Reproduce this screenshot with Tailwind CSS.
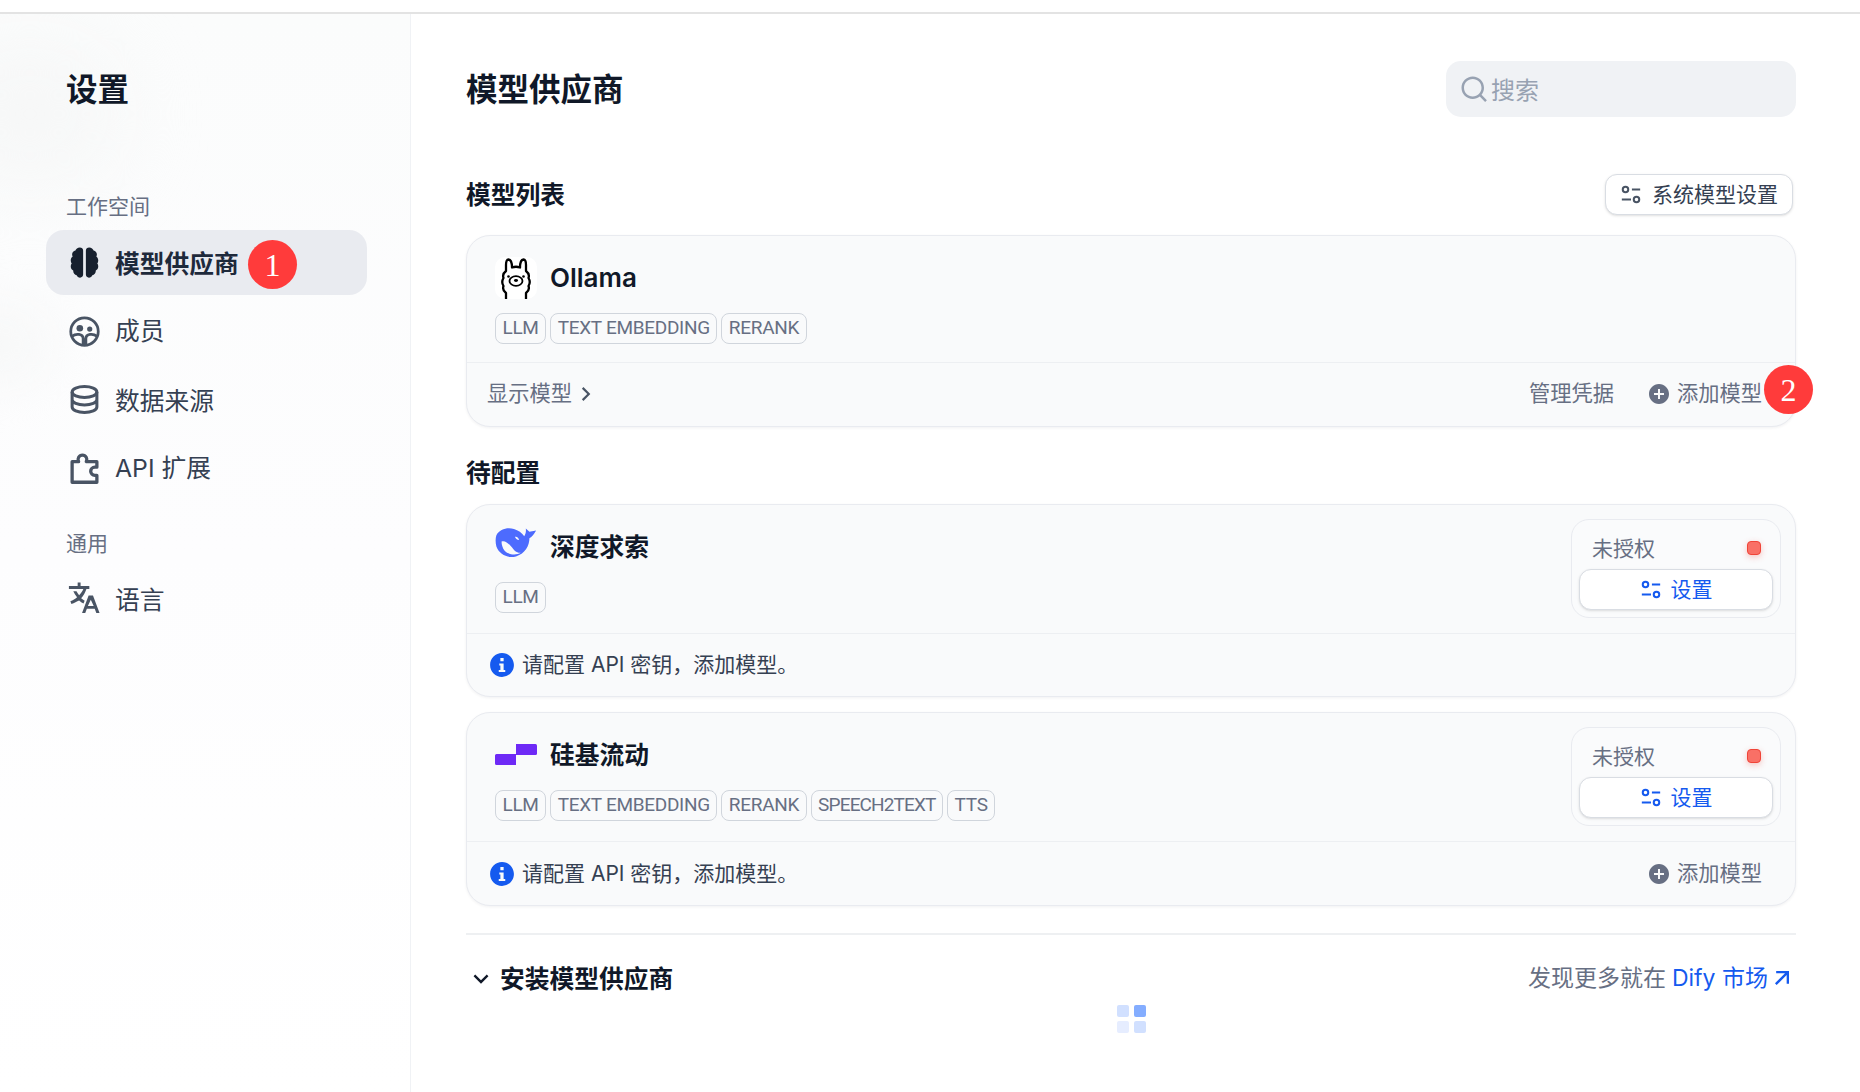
<!DOCTYPE html>
<html lang="zh">
<head>
<meta charset="utf-8">
<title>设置</title>
<script src="https://cdn.jsdelivr.net/npm/@tailwindcss/browser@4"></script>
</head>
<body class="bg-white [font-family:Inter,'Noto_Sans_CJK_SC',sans-serif] text-[#354052] overflow-hidden">
<div class="w-[1860px] h-[1092px] flex flex-col overflow-hidden">
  <div class="h-[14px] shrink-0 border-b-2 border-[#e3e3e3] bg-white"></div>
  <div class="flex flex-1 min-h-0">
    <!-- Sidebar -->
    <aside class="relative w-[411px] shrink-0 border-r border-[#f0f2f5] bg-linear-to-b from-[#fbfcfc] via-[#fdfdfe] to-white pl-[46px] pr-[43px] pt-[53px] overflow-hidden">
      <div class="absolute -left-[60px] top-[30px] w-[180px] h-[140px] rounded-full bg-[#f6f7f7] blur-2xl"></div>
      <div class="absolute -left-[60px] top-[290px] w-[110px] h-[80px] rounded-full bg-[#f7f8f8] blur-xl"></div>
      <div class="relative">
        <h1 class="h-[44px] pl-[20px] pt-[1px] text-[31.500px] leading-[44px] font-bold text-[#101828] mb-[80px]">设置</h1>
        <div class="h-[30px] pl-[20px] pt-[1px] text-[21px] leading-[30px] text-[#676f83] mb-[9px]">工作空间</div>
        <nav class="flex flex-col gap-[3.500px]">
          <a class="relative h-[65px] rounded-[18px] bg-[#e9ebf0] flex items-center pl-[22px] gap-[14px] text-[24.750px] font-semibold text-[#1e293b]">
            <svg class="w-[33px] h-[33px] text-[#17202e]" viewBox="0 0 24 24" fill="currentColor"><path d="M11 3.200C11 1.900 10 1 8.600 1 7 1 5.700 2 5.400 3.300 3.900 3.600 3 4.800 3 6.200c0 .6.1 1 .4 1.500C2.400 8.400 2 9.400 2 10.600c0 .9.300 1.600.7 2.200-.5.6-.7 1.300-.7 2.100 0 1.300.7 2.400 1.800 2.900v.3c0 1.600 1.100 2.900 2.500 3.200.4 1 1.400 1.700 2.500 1.700 1.200 0 2.200-.9 2.200-2.200zM13 3.200C13 1.900 14 1 15.400 1c1.600 0 2.900 1 3.200 2.300C20.100 3.600 21 4.800 21 6.200c0 .6-.1 1-.4 1.500.9.7 1.400 1.700 1.400 2.900 0 .9-.3 1.600-.7 2.200.5.6.7 1.300.7 2.100 0 1.300-.7 2.400-1.800 2.900v.3c0 1.600-1.100 2.900-2.500 3.200-.4 1-1.400 1.700-2.500 1.700-1.200 0-2.200-.9-2.200-2.200z"/></svg>
            <span class="pt-[4px]">模型供应商</span>
            <span class="absolute left-[202px] top-[10px] w-[49px] h-[49px] rounded-full bg-[#ff3b3b] text-white flex items-center justify-center [font-family:'Liberation_Serif',serif] text-[32px] font-normal">1</span>
          </a>
          <a class="h-[65px] rounded-[18px] flex items-center pl-[22px] gap-[14px] text-[24.750px] text-[#354052]">
            <svg class="w-[33px] h-[33px] text-[#495464]" viewBox="0 0 24 24" fill="none" stroke="currentColor" stroke-width="2"><circle cx="12" cy="12" r="10"/><circle cx="8.600" cy="9.600" r="2.400" fill="currentColor" stroke="none"/><circle cx="15.800" cy="10.200" r="1.900" fill="currentColor" stroke="none"/><path d="M2.800 15.500c1.600-1.200 3.400-1.700 5.200-1.400 1.800.3 3 1.200 3 3v4.400M21.200 15.500c-1.600-1.200-3.400-1.700-5.200-1.400-1.800.3-3 1.200-3 3v4.400"/></svg>
            <span class="pt-[2px]">成员</span>
          </a>
          <a class="h-[65px] rounded-[18px] flex items-center pl-[22px] gap-[14px] text-[24.750px] text-[#354052]">
            <svg class="w-[33px] h-[33px] text-[#495464]" viewBox="0 0 24 24" fill="none" stroke="currentColor" stroke-width="2.200"><ellipse cx="12" cy="6.500" rx="9" ry="4"/><path d="M3 6.500v11c0 2.200 4 4 9 4s9-1.800 9-4v-11M3 12c0 2.200 4 4 9 4s9-1.800 9-4"/></svg>
            <span class="pt-[5px]">数据来源</span>
          </a>
          <a class="h-[65px] rounded-[18px] flex items-center pl-[22px] gap-[14px] text-[24.750px] text-[#354052]">
            <svg class="w-[33px] h-[33px] text-[#495464]" viewBox="0 0 24 24" fill="none" stroke="currentColor" stroke-width="2.400" stroke-linejoin="round"><path d="M3 22V7h4.700a3.200 3.200 0 1 1 5.600 0H21v4h-1.500a3 3 0 1 0 0 6H21v5z"/></svg>
            <span class="pt-[1px]">API 扩展</span>
          </a>
        </nav>
        <div class="mt-[27.500px] h-[30px] pl-[20px] pt-[1px] text-[21px] leading-[30px] text-[#676f83] mb-[8px]">通用</div>
        <a class="h-[65px] rounded-[18px] flex items-center pl-[20px] gap-[14px] text-[24.750px] text-[#354052]">
          <svg class="w-[35px] h-[35px] text-[#495464]" viewBox="0 0 24 24" fill="currentColor"><path fill-rule="evenodd" d="M18.500 10 23 22h-2.200l-1.100-3h-5.400l-1.100 3H11l4.500-12zM17 12.800 15 17.200h4zM10 1v2.500h6v2h-2c-.8 2.400-2 4.500-3.600 6.300.7.600 1.500 1.200 2.400 1.700l-.8 1.900c-1.100-.6-2.100-1.300-3-2.100C7.500 13.800 5.700 15 3.700 15.800L3 13.900c1.700-.7 3.300-1.600 4.600-2.800C6.500 9.800 5.600 8.500 5 7h2.200c.5 1 1.100 1.900 1.800 2.700 1.300-1.300 2.200-2.600 2.900-4.200H2v-2h6V1z"/></svg>
          <span class="pt-[4px]">语言</span>
        </a>
      </div>
    </aside>

    <!-- Main -->
    <main class="flex-1 min-w-0 pl-[55px] pr-[64px] pt-[47px]">
      <header class="flex items-center justify-between h-[56px]">
        <h2 class="pt-[2px] text-[31.500px] font-bold text-[#101828]">模型供应商</h2>
        <div class="w-[350px] h-[56px] rounded-[15px] bg-[#f0f2f5] flex items-center pl-[13px] gap-[2px] text-[24px] text-[#98a2b2]">
          <svg class="w-[30px] h-[30px]" viewBox="0 0 24 24" fill="currentColor"><path fill-rule="evenodd" d="M18.031 16.617 22.314 20.900 20.900 22.314 16.617 18.031C15.077 19.263 13.124 20 11 20 6.032 20 2 15.968 2 11S6.032 2 11 2s9 4.032 9 9c0 2.124-.737 4.077-1.969 5.617zM16.025 15.875C17.248 14.615 18 12.896 18 11c0-3.868-3.133-7-7-7s-7 3.132-7 7 3.133 7 7 7c1.896 0 3.615-.752 4.875-1.975z"/></svg>
          <span class="pt-[4px]">搜索</span>
        </div>
      </header>

      <div class="mt-[57px] h-[41px] flex items-center justify-between mb-[20px]">
        <h3 class="pt-[2px] text-[24.750px] font-bold text-[#101828]">模型列表</h3>
        <button class="mr-[3px] w-[188px] h-[41px] rounded-[12px] border border-[#d9dde3] bg-white shadow-sm flex items-center justify-center gap-[10px] text-[21px] text-[#354052]">
          <svg class="w-[22px] h-[22px] text-[#495464]" viewBox="0 0 24 24" fill="none" stroke="currentColor" stroke-width="2.200"><circle cx="6" cy="6" r="3"/><path d="M13 6h9M2 17h10"/><circle cx="18" cy="17" r="3"/></svg>
          <span>系统模型设置</span>
        </button>
      </div>

      <!-- Ollama card -->
      <section class="relative h-[192px] rounded-[24px] border border-[#e9ebf0] bg-[#f9fafb] shadow-[0_1px_3px_rgba(16,24,40,0.06)] flex flex-col">
        <div class="h-[126px] pl-[28px] pt-[21px]">
          <div class="flex items-center gap-[14px] h-[42px]">
            <div class="w-[42px] h-[42px] rounded-[10px] bg-white overflow-hidden">
              <svg viewBox="0 0 42 42" class="w-[42px] h-[42px]" fill="none" stroke="#000" stroke-width="2.300" stroke-linejoin="round" stroke-linecap="round"><path d="M11 42V36Q7 33 8.500 29Q6 25 8.500 21Q7 17 11 14V8Q11 2.500 13.500 2.500Q17 3 17 10.500Q21 9 25 10.500Q25 3 28.500 2.500Q31 2.500 31 8V14Q35 17 33.500 21Q36 25 33.500 29Q35 33 31 36V42"/><ellipse cx="21" cy="24" rx="6.500" ry="4.800" stroke-width="1.800"/><ellipse cx="21" cy="23.500" rx="2" ry="1.400" fill="#000" stroke="none"/><circle cx="13.500" cy="19.500" r="1.300" fill="#000" stroke="none"/><circle cx="28.500" cy="19.500" r="1.300" fill="#000" stroke="none"/></svg>
            </div>
            <span class="-mt-[2px] text-[26px] font-semibold text-[#101828] -ml-[1px]">Ollama</span>
          </div>
          <div class="mt-[14px] flex gap-[4px]">
            <span class="h-[31px] px-[6.500px] rounded-[8px] border border-[#d0d5dc] flex items-center [font-family:Roboto,sans-serif] text-[19px] tracking-[-0.3px] text-[#676f83] uppercase">LLM</span>
            <span class="h-[31px] px-[6.500px] rounded-[8px] border border-[#d0d5dc] flex items-center [font-family:Roboto,sans-serif] text-[19px] tracking-[-0.3px] text-[#676f83] uppercase">TEXT EMBEDDING</span>
            <span class="h-[31px] px-[6.500px] rounded-[8px] border border-[#d0d5dc] flex items-center [font-family:Roboto,sans-serif] text-[19px] tracking-[-0.3px] text-[#676f83] uppercase">RERANK</span>
          </div>
        </div>
        <div class="flex-1 border-t border-[#edeff2] pl-[20px] pr-[33px] pb-[2px] flex items-center justify-between text-[21.250px] text-[#676f83]">
          <div class="flex items-center gap-[1px]">
            <span>显示模型</span>
            <svg class="w-[26px] h-[26px] text-[#495464]" viewBox="0 0 24 24" fill="currentColor"><path d="M13.172 12 8.222 7.050 9.636 5.636 16 12 9.636 18.364 8.222 16.950z"/></svg>
          </div>
          <div class="flex items-center">
            <span class="mr-[33px]">管理凭据</span>
            <svg class="w-[24px] h-[24px] mr-[6px]" viewBox="0 0 24 24" fill="currentColor"><path fill-rule="evenodd" d="M12 22C6.477 22 2 17.523 2 12S6.477 2 12 2s10 4.477 10 10-4.477 10-10 10zM11 11H7v2h4v4h2v-4h4v-2h-4V7h-2z"/></svg>
            <span>添加模型</span>
          </div>
        </div>
        <span class="absolute left-[1297px] top-[129px] w-[49px] h-[49px] rounded-full bg-[#ff3b3b] text-white flex items-center justify-center [font-family:'Liberation_Serif',serif] text-[32px]">2</span>
      </section>

      <h3 class="mt-[30px] h-[32px] leading-[32px] text-[24.750px] font-bold text-[#101828] mb-[15px]">待配置</h3>

      <!-- DeepSeek card -->
      <section class="h-[193px] rounded-[24px] border border-[#e9ebf0] bg-[#f9fafb] shadow-[0_1px_3px_rgba(16,24,40,0.06)] flex flex-col">
        <div class="h-[128px] pl-[28px] pr-[14px] pt-[14px] flex justify-between">
          <div class="pt-[7px]">
            <div class="flex items-center gap-[14px] h-[42px]">
              <svg viewBox="0 0 40 31" class="w-[42px] h-[32px] -mt-[8px]"><path fill="#4d6bfe" d="M1 8C4 2 12 0 18 2 22 3 26 6 28 9 29 7 30 5 29.500 1.500L33 4.500 39.500 3.500C37.500 7 35.500 9.500 33 11 33 18 29 26 20 28.500 12 30.500 4 27 1 19 0 15 0 11 1 8Z"/><path fill="#f9fafb" d="M6 14C10 12.500 14 17 17.500 21.500 19.500 24 21.500 25 24.500 25 20.500 27.500 12.500 27 9 23 7 20.500 6 17 6 14Z"/><path fill="#f9fafb" d="M19 9.500C21 9 22.500 10.500 23 12.500 21 12.500 19.500 11.500 19 9.500Z"/></svg>
              <span class="text-[24.750px] font-bold text-[#101828] pt-[1px] -ml-[1px]">深度求索</span>
            </div>
            <div class="mt-[14px] flex gap-[4px]">
              <span class="h-[31px] px-[6.500px] rounded-[8px] border border-[#d0d5dc] flex items-center [font-family:Roboto,sans-serif] text-[19px] tracking-[-0.3px] text-[#676f83] uppercase">LLM</span>
            </div>
          </div>
          <div class="w-[210px] h-[99px] rounded-[18px] border border-[#e9ebf0] bg-[#fafbfc] px-[7px]">
            <div class="h-[49px] pt-[6px] pl-[13px] pr-[12px] flex items-center justify-between text-[21px] text-[#676f83]">
              <span class="pt-[2px]">未授权</span>
              <span class="w-[14px] h-[14px] rounded-[4px] bg-[#f97066] border border-[#f04438] shadow-[0_2px_6px_rgba(240,68,56,0.3)]"></span>
            </div>
            <button class="w-full h-[41px] rounded-[12px] border border-[#d9dde3] bg-white shadow-sm flex items-center justify-center gap-[9px] text-[21px] text-[#155aef]">
              <svg class="w-[22px] h-[22px]" viewBox="0 0 24 24" fill="none" stroke="currentColor" stroke-width="2.200"><circle cx="6" cy="6" r="3"/><path d="M13 6h9M2 17h10"/><circle cx="18" cy="17" r="3"/></svg>
              <span>设置</span>
            </button>
          </div>
        </div>
        <div class="flex-1 border-t border-[#edeff2] pl-[22px] flex items-center gap-[7px] text-[21px] text-[#354052]">
          <svg class="w-[26px] h-[26px] text-[#155aef]" viewBox="0 0 24 24" fill="currentColor"><path fill-rule="evenodd" d="M12 23C5.925 23 1 18.075 1 12S5.925 1 12 1s11 4.925 11 11-4.925 11-11 11zM10.500 5.500h3v3h-3zM9.500 10.500h4v6h1.500v2h-6v-2h1.500v-4h-1z"/></svg>
          <span>请配置 API 密钥，添加模型。</span>
        </div>
      </section>

      <!-- SiliconFlow card -->
      <section class="mt-[15px] h-[194px] rounded-[24px] border border-[#e9ebf0] bg-[#f9fafb] shadow-[0_1px_3px_rgba(16,24,40,0.06)] flex flex-col">
        <div class="h-[128px] pl-[28px] pr-[14px] pt-[14px] flex justify-between">
          <div class="pt-[7px]">
            <div class="flex items-center gap-[14px] h-[42px]">
              <svg viewBox="0 0 42 21" class="w-[42px] h-[21px] -mt-[2px]" fill="#6e29f6"><path d="M1.500 10H21V21H1.500A1.500 1.500 0 0 1 0 19.500V11.500A1.500 1.500 0 0 1 1.500 10z"/><path d="M21 0h19.500A1.500 1.500 0 0 1 42 1.500V9.500A1.500 1.500 0 0 1 40.500 11H21z"/></svg>
              <span class="text-[24.750px] font-bold text-[#101828] pt-[2px] -ml-[1px]">硅基流动</span>
            </div>
            <div class="mt-[14px] flex gap-[4px]">
              <span class="h-[31px] px-[6.500px] rounded-[8px] border border-[#d0d5dc] flex items-center [font-family:Roboto,sans-serif] text-[19px] tracking-[-0.3px] text-[#676f83] uppercase">LLM</span>
              <span class="h-[31px] px-[6.500px] rounded-[8px] border border-[#d0d5dc] flex items-center [font-family:Roboto,sans-serif] text-[19px] tracking-[-0.3px] text-[#676f83] uppercase">TEXT EMBEDDING</span>
              <span class="h-[31px] px-[6.500px] rounded-[8px] border border-[#d0d5dc] flex items-center [font-family:Roboto,sans-serif] text-[19px] tracking-[-0.3px] text-[#676f83] uppercase">RERANK</span>
              <span class="h-[31px] px-[6.500px] rounded-[8px] border border-[#d0d5dc] flex items-center [font-family:Roboto,sans-serif] text-[19px] tracking-[-0.850px] text-[#676f83] uppercase">SPEECH2TEXT</span>
              <span class="h-[31px] px-[6.500px] rounded-[8px] border border-[#d0d5dc] flex items-center [font-family:Roboto,sans-serif] text-[19px] tracking-[-0.3px] text-[#676f83] uppercase">TTS</span>
            </div>
          </div>
          <div class="w-[210px] h-[99px] rounded-[18px] border border-[#e9ebf0] bg-[#fafbfc] px-[7px]">
            <div class="h-[49px] pt-[6px] pl-[13px] pr-[12px] flex items-center justify-between text-[21px] text-[#676f83]">
              <span class="pt-[2px]">未授权</span>
              <span class="w-[14px] h-[14px] rounded-[4px] bg-[#f97066] border border-[#f04438] shadow-[0_2px_6px_rgba(240,68,56,0.3)]"></span>
            </div>
            <button class="w-full h-[41px] rounded-[12px] border border-[#d9dde3] bg-white shadow-sm flex items-center justify-center gap-[9px] text-[21px] text-[#155aef]">
              <svg class="w-[22px] h-[22px]" viewBox="0 0 24 24" fill="none" stroke="currentColor" stroke-width="2.200"><circle cx="6" cy="6" r="3"/><path d="M13 6h9M2 17h10"/><circle cx="18" cy="17" r="3"/></svg>
              <span>设置</span>
            </button>
          </div>
        </div>
        <div class="flex-1 border-t border-[#edeff2] pl-[22px] pr-[33px] flex items-center justify-between text-[21px]">
          <div class="flex items-center gap-[7px] text-[#354052]">
            <svg class="w-[26px] h-[26px] text-[#155aef]" viewBox="0 0 24 24" fill="currentColor"><path fill-rule="evenodd" d="M12 23C5.925 23 1 18.075 1 12S5.925 1 12 1s11 4.925 11 11-4.925 11-11 11zM10.500 5.500h3v3h-3zM9.500 10.500h4v6h1.500v2h-6v-2h1.500v-4h-1z"/></svg>
            <span>请配置 API 密钥，添加模型。</span>
          </div>
          <div class="flex items-center text-[#676f83] text-[21.250px]">
            <svg class="w-[24px] h-[24px] mr-[6px]" viewBox="0 0 24 24" fill="currentColor"><path fill-rule="evenodd" d="M12 22C6.477 22 2 17.523 2 12S6.477 2 12 2s10 4.477 10 10-4.477 10-10 10zM11 11H7v2h4v4h2v-4h4v-2h-4V7h-2z"/></svg>
            <span>添加模型</span>
          </div>
        </div>
      </section>

      <div class="mt-[27px] border-t-2 border-[#eef0f2] pt-[25px]">
        <div class="h-[40px] flex items-center justify-between">
          <div class="flex items-center gap-[5px] pl-[1px]">
            <svg class="w-[28px] h-[28px] text-[#101828] -mt-[3px]" viewBox="0 0 24 24" fill="currentColor"><path d="M12 13.171 16.950 8.222 18.364 9.636 12 16 5.636 9.636 7.050 8.222z"/></svg>
            <span class="text-[24.750px] font-bold text-[#101828]">安装模型供应商</span>
          </div>
          <div class="flex items-center -mt-[4px] text-[23px] text-[#676f83]">
            <span>发现更多就在</span>
            <span class="ml-[6px] text-[#155aef]">Dify 市场</span>
            <svg class="w-[28px] h-[28px] text-[#155aef]" viewBox="0 0 24 24" fill="currentColor"><path d="M16.004 9.414 7.397 18.021 5.983 16.607 14.590 8H7.004V6h11v11h-2z"/></svg>
          </div>
        </div>
        <div class="mt-[5px] grid grid-cols-[12px_12px] gap-x-[5px] gap-y-[4px] w-fit mx-auto">
          <span class="h-[12px] rounded-[2px] bg-[#d1e0ff]"></span>
          <span class="h-[12px] rounded-[2px] bg-[#84adff]"></span>
          <span class="h-[12px] rounded-[2px] bg-[#e6edff]"></span>
          <span class="h-[12px] rounded-[2px] bg-[#d1e0ff]"></span>
        </div>
      </div>
    </main>
  </div>
</div>
</body>
</html>
